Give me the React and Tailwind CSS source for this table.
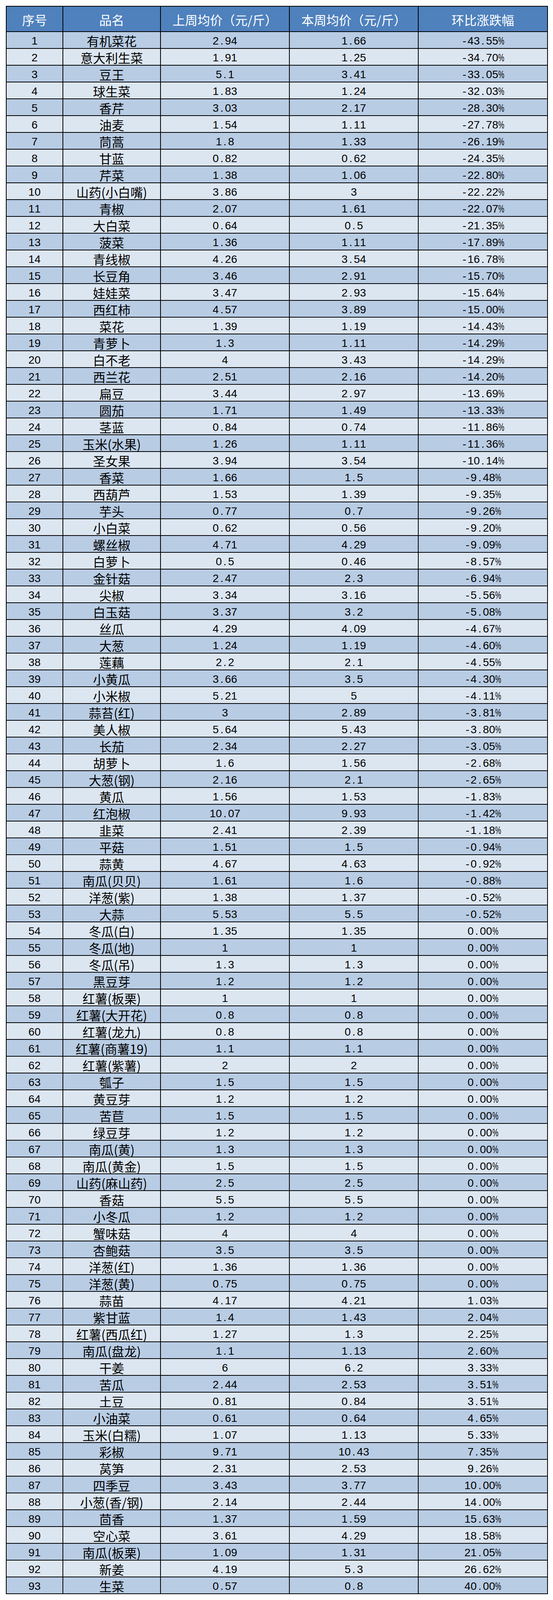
import React from "react";

const rows = [
  ["有机菜花", "2.94", "1.66", "-43.55%"],
  ["意大利生菜", "1.91", "1.25", "-34.70%"],
  ["豆王", "5.1", "3.41", "-33.05%"],
  ["球生菜", "1.83", "1.24", "-32.03%"],
  ["香芹", "3.03", "2.17", "-28.30%"],
  ["油麦", "1.54", "1.11", "-27.78%"],
  ["茼蒿", "1.8", "1.33", "-26.19%"],
  ["甘蓝", "0.82", "0.62", "-24.35%"],
  ["芹菜", "1.38", "1.06", "-22.80%"],
  ["山药(小白嘴)", "3.86", "3", "-22.22%"],
  ["青椒", "2.07", "1.61", "-22.07%"],
  ["大白菜", "0.64", "0.5", "-21.35%"],
  ["菠菜", "1.36", "1.11", "-17.89%"],
  ["青线椒", "4.26", "3.54", "-16.78%"],
  ["长豆角", "3.46", "2.91", "-15.70%"],
  ["娃娃菜", "3.47", "2.93", "-15.64%"],
  ["西红柿", "4.57", "3.89", "-15.00%"],
  ["菜花", "1.39", "1.19", "-14.43%"],
  ["青萝卜", "1.3", "1.11", "-14.29%"],
  ["白不老", "4", "3.43", "-14.29%"],
  ["西兰花", "2.51", "2.16", "-14.20%"],
  ["扁豆", "3.44", "2.97", "-13.69%"],
  ["圆茄", "1.71", "1.49", "-13.33%"],
  ["茎蓝", "0.84", "0.74", "-11.86%"],
  ["玉米(水果)", "1.26", "1.11", "-11.36%"],
  ["圣女果", "3.94", "3.54", "-10.14%"],
  ["香菜", "1.66", "1.5", "-9.48%"],
  ["西葫芦", "1.53", "1.39", "-9.35%"],
  ["芋头", "0.77", "0.7", "-9.26%"],
  ["小白菜", "0.62", "0.56", "-9.20%"],
  ["螺丝椒", "4.71", "4.29", "-9.09%"],
  ["白萝卜", "0.5", "0.46", "-8.57%"],
  ["金针菇", "2.47", "2.3", "-6.94%"],
  ["尖椒", "3.34", "3.16", "-5.56%"],
  ["白玉菇", "3.37", "3.2", "-5.08%"],
  ["丝瓜", "4.29", "4.09", "-4.67%"],
  ["大葱", "1.24", "1.19", "-4.60%"],
  ["莲藕", "2.2", "2.1", "-4.55%"],
  ["小黄瓜", "3.66", "3.5", "-4.30%"],
  ["小米椒", "5.21", "5", "-4.11%"],
  ["蒜苔(红)", "3", "2.89", "-3.81%"],
  ["美人椒", "5.64", "5.43", "-3.80%"],
  ["长茄", "2.34", "2.27", "-3.05%"],
  ["胡萝卜", "1.6", "1.56", "-2.68%"],
  ["大葱(钢)", "2.16", "2.1", "-2.65%"],
  ["黄瓜", "1.56", "1.53", "-1.83%"],
  ["红泡椒", "10.07", "9.93", "-1.42%"],
  ["韭菜", "2.41", "2.39", "-1.18%"],
  ["平菇", "1.51", "1.5", "-0.94%"],
  ["蒜黄", "4.67", "4.63", "-0.92%"],
  ["南瓜(贝贝)", "1.61", "1.6", "-0.88%"],
  ["洋葱(紫)", "1.38", "1.37", "-0.52%"],
  ["大蒜", "5.53", "5.5", "-0.52%"],
  ["冬瓜(白)", "1.35", "1.35", "0.00%"],
  ["冬瓜(地)", "1", "1", "0.00%"],
  ["冬瓜(吊)", "1.3", "1.3", "0.00%"],
  ["黑豆芽", "1.2", "1.2", "0.00%"],
  ["红薯(板栗)", "1", "1", "0.00%"],
  ["红薯(大开花)", "0.8", "0.8", "0.00%"],
  ["红薯(龙九)", "0.8", "0.8", "0.00%"],
  ["红薯(商薯19)", "1.1", "1.1", "0.00%"],
  ["红薯(紫薯)", "2", "2", "0.00%"],
  ["瓠子", "1.5", "1.5", "0.00%"],
  ["黄豆芽", "1.2", "1.2", "0.00%"],
  ["苦苣", "1.5", "1.5", "0.00%"],
  ["绿豆芽", "1.2", "1.2", "0.00%"],
  ["南瓜(黄)", "1.3", "1.3", "0.00%"],
  ["南瓜(黄金)", "1.5", "1.5", "0.00%"],
  ["山药(麻山药)", "2.5", "2.5", "0.00%"],
  ["香菇", "5.5", "5.5", "0.00%"],
  ["小冬瓜", "1.2", "1.2", "0.00%"],
  ["蟹味菇", "4", "4", "0.00%"],
  ["杏鲍菇", "3.5", "3.5", "0.00%"],
  ["洋葱(红)", "1.36", "1.36", "0.00%"],
  ["洋葱(黄)", "0.75", "0.75", "0.00%"],
  ["蒜苗", "4.17", "4.21", "1.03%"],
  ["紫甘蓝", "1.4", "1.43", "2.04%"],
  ["红薯(西瓜红)", "1.27", "1.3", "2.25%"],
  ["南瓜(盘龙)", "1.1", "1.13", "2.60%"],
  ["干姜", "6", "6.2", "3.33%"],
  ["苦瓜", "2.44", "2.53", "3.51%"],
  ["土豆", "0.81", "0.84", "3.51%"],
  ["小油菜", "0.61", "0.64", "4.65%"],
  ["玉米(白糯)", "1.07", "1.13", "5.33%"],
  ["彩椒", "9.71", "10.43", "7.35%"],
  ["莴笋", "2.31", "2.53", "9.26%"],
  ["四季豆", "3.43", "3.77", "10.00%"],
  ["小葱(香/钢)", "2.14", "2.44", "14.00%"],
  ["茴香", "1.37", "1.59", "15.63%"],
  ["空心菜", "3.61", "4.29", "18.58%"],
  ["南瓜(板栗)", "1.09", "1.31", "21.05%"],
  ["新姜", "4.19", "5.3", "26.62%"],
  ["生菜", "0.57", "0.8", "40.00%"],
];

function Num({ s }) {
  return (
    <span className="inline-flex font-['Liberation_Sans',Arial,sans-serif] text-[28px] leading-none">
      {[...s].map((c, i) =>
        c === "%" ? (
          <span key={i} className="inline-flex justify-center w-[15.75px]">
            <span className="inline-block scale-x-[0.62]">{c}</span>
          </span>
        ) : (
          <span key={i} className="inline-flex justify-center w-[15.75px]">
            {c}
          </span>
        )
      )}
    </span>
  );
}

const cell = "border-2 border-black text-center align-middle p-0 leading-none";

export default function App() {
  return (
    <div className="w-[1416px] h-[4190px] overflow-hidden bg-white pt-[15px] pl-[15px] font-['Noto_Sans_CJK_SC','Noto_Sans',sans-serif] leading-none">
      <table className="table-fixed border-collapse w-[1386px] border-2 border-black">
        <colgroup>
          <col className="w-[145px]" />
          <col className="w-[250px]" />
          <col className="w-[330px]" />
          <col className="w-[330px]" />
          <col className="w-[331px]" />
        </colgroup>
        <thead>
          <tr className="bg-[#4f81bd] text-white text-[32px]">
            <th className={cell + " font-normal h-[65px] pt-[3px]"}>序号</th>
            <th className={cell + " font-normal h-[65px] pt-[3px]"}>品名</th>
            <th className={cell + " font-normal h-[65px] pt-[3px]"}>上周均价（元/斤）</th>
            <th className={cell + " font-normal h-[65px] pt-[3px]"}>本周均价（元/斤）</th>
            <th className={cell + " font-normal h-[65px] pt-[3px]"}>环比涨跌幅</th>
          </tr>
        </thead>
        <tbody>
          {rows.map((r, i) => (
            <tr
              key={i}
              className={i % 2 === 0 ? "bg-[#b8cce4] text-black" : "bg-[#dce6f1] text-black"}
            >
              <td className={cell + " h-[43px] pt-[4px]"}>
                <Num s={String(i + 1)} />
              </td>
              <td className={cell + " h-[43px] pt-[3px] text-[32px] whitespace-nowrap"}>
                {r[0]}
              </td>
              <td className={cell + " h-[43px] pt-[4px]"}>
                <Num s={r[1]} />
              </td>
              <td className={cell + " h-[43px] pt-[4px]"}>
                <Num s={r[2]} />
              </td>
              <td className={cell + " h-[43px] pt-[4px]"}>
                <Num s={r[3]} />
              </td>
            </tr>
          ))}
        </tbody>
      </table>
    </div>
  );
}
